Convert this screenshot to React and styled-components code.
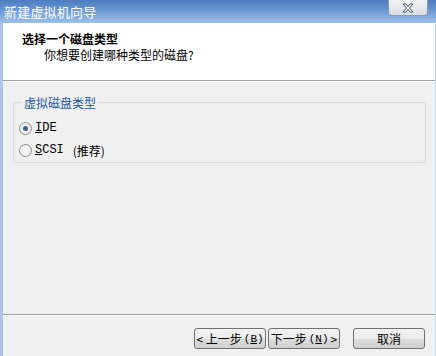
import React from "react";
import styled, { createGlobalStyle } from "styled-components";

const Global = createGlobalStyle`
  html, body { margin: 0; padding: 0; background: #f0f0f0; }
  #root { width: 436px; height: 356px; }
`;

const CJK = `"Noto Sans CJK SC", "Liberation Sans", sans-serif`;

const Window = styled.div`
  width: 436px;
  height: 356px;
  display: flex;
  flex-direction: column;
  background: #f0f0f0;
  font-family: ${CJK};
  font-size: 12px;
  color: #000;
  overflow: hidden;
`;

const TitleBar = styled.div`
  height: 23px;
  flex: none;
  display: flex;
  justify-content: space-between;
  align-items: flex-start;
  background: linear-gradient(#4d7dbf 0%, #6b98d2 45%, #9cc0e8 100%);
  padding-left: 4px;
  padding-right: 8px;
`;

const TitleText = styled.div`
  color: #fff;
  font-size: 13px;
  line-height: 23px;
  letter-spacing: 0.2px;
`;

const CloseButton = styled.div`
  width: 40px;
  height: 16px;
  box-sizing: border-box;
  border: 1px solid #8a9bb0;
  border-top: none;
  border-radius: 0 0 4px 4px;
  background: linear-gradient(#f2f2f2, #d8dde4);
  display: flex;
  align-items: center;
  justify-content: center;
`;

const Frame = styled.div`
  flex: 1;
  display: flex;
  flex-direction: column;
  border-left: 3px solid #a9c6ea;
  border-right: 1px solid #c8d8ec;
`;

const Header = styled.div`
  height: 58px;
  flex: none;
  background: #fff;
  border-bottom: 1px solid #a0a0a0;
  box-shadow: 0 1px 0 #fff;
  padding: 9px 0 0 19px;
  box-sizing: border-box;
`;

const HeaderTitle = styled.div`
  font-weight: bold;
  font-size: 12px;
  line-height: 14px;
`;

const HeaderSub = styled.div`
  font-size: 12px;
  line-height: 14px;
  margin: 2px 0 0 22px;
`;

const Body = styled.div`
  flex: 1;
  padding: 15px 9px 0 10px;
`;

const GroupBox = styled.fieldset`
  margin: 0;
  height: 53px;
  border: 1px solid #d5dfe5;
  border-radius: 3px;
  padding: 12px 0 0 5px;
  display: flex;
  flex-direction: column;
  gap: 8px;
`;

const Legend = styled.legend`
  color: #2158a8;
  padding: 0 2px;
  margin-left: 3px;
  font-size: 12px;
  line-height: 13px;
`;

const RadioRow = styled.label`
  display: flex;
  align-items: center;
  gap: 3px;
  height: 14px;
`;

const RadioCircle = styled.span`
  width: 13px;
  height: 13px;
  box-sizing: border-box;
  border-radius: 50%;
  border: 1px solid #8e8f8f;
  background: radial-gradient(circle, #fff 0%, #e2e2e2 100%);
  display: flex;
  align-items: center;
  justify-content: center;
  &::after {
    content: "";
    width: 5px;
    height: 5px;
    border-radius: 50%;
    background: ${(p) => (p.$checked ? "#3a5f9a" : "transparent")};
  }
`;

const Mono = styled.span`
  font-family: "Liberation Mono", "DejaVu Sans Mono", monospace;
  font-size: 12px;
`;

const Underline = styled.span`
  text-decoration: underline;
`;

const Note = styled.span`
  margin-left: 6px;
`;

const Footer = styled.div`
  height: 42px;
  flex: none;
  border-top: 1px solid #a0a0a0;
  box-shadow: inset 0 1px 0 #fff;
  display: flex;
  align-items: flex-start;
  justify-content: flex-end;
  padding: 13px 10px 0 0;
  box-sizing: border-box;
`;

const Button = styled.button`
  height: 21px;
  width: ${(p) => p.$w || 72}px;
  margin-left: ${(p) => p.$gap || 0}px;
  box-sizing: border-box;
  border: 1px solid #707070;
  border-radius: 3px;
  background: linear-gradient(#f2f2f2 0%, #ebebeb 50%, #dddddd 51%, #cfcfcf 100%);
  font-family: ${CJK};
  font-size: 12px;
  color: #000;
  padding: 0;
  display: flex;
  align-items: center;
  justify-content: center;
  gap: 2px;
`;

const Key = styled.span`
  font-family: "Liberation Mono", monospace;
  font-size: 11px;
`;

export default function App() {
  return (
    <>
      <Global />
      <Window>
        <TitleBar>
          <TitleText>新建虚拟机向导</TitleText>
          <CloseButton>
            <svg width="14" height="10" viewBox="0 0 14 10">
              <path
                d="M2 1 L5 1 L7 3.5 L9 1 L12 1 L8.5 5 L12 9 L9 9 L7 6.5 L5 9 L2 9 L5.5 5 Z"
                fill="#fff"
                stroke="#4a5565"
                strokeWidth="1"
                strokeLinejoin="round"
              />
            </svg>
          </CloseButton>
        </TitleBar>
        <Frame>
          <Header>
            <HeaderTitle>选择一个磁盘类型</HeaderTitle>
            <HeaderSub>你想要创建哪种类型的磁盘?</HeaderSub>
          </Header>
          <Body>
            <GroupBox>
              <Legend>虚拟磁盘类型</Legend>
              <RadioRow>
                <RadioCircle $checked />
                <Mono>
                  <Underline>I</Underline>DE
                </Mono>
              </RadioRow>
              <RadioRow>
                <RadioCircle />
                <Mono>
                  <Underline>S</Underline>CSI
                </Mono>
                <Note>(推荐)</Note>
              </RadioRow>
            </GroupBox>
          </Body>
          <Footer>
            <Button $w={72}>
              &lt; 上一步<Key>(<Underline>B</Underline>)</Key>
            </Button>
            <Button $w={72} $gap={2}>
              下一步<Key>(<Underline>N</Underline>)</Key> &gt;
            </Button>
            <Button $w={72} $gap={13}>取消</Button>
          </Footer>
        </Frame>
      </Window>
    </>
  );
}
